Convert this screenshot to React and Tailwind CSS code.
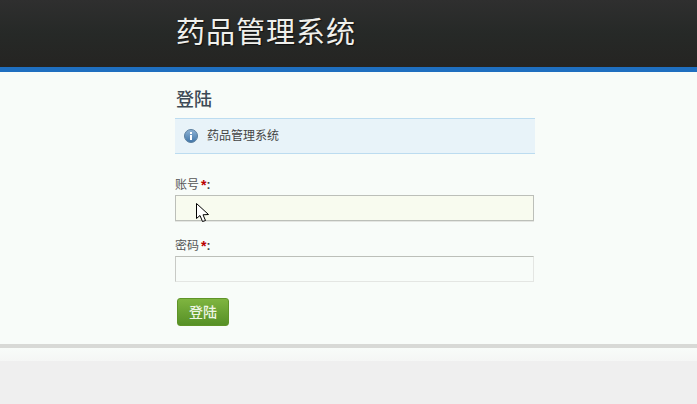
import React from 'react';

const cjk = 'font-["Liberation_Sans","Noto_Sans_CJK_SC",sans-serif]';

const InfoIcon = () => (
  <svg width="14" height="14" viewBox="0 0 14 14" className="shrink-0">
    <defs>
      <linearGradient id="infoFill" x1="0" y1="0" x2="0" y2="1">
        <stop offset="0" stopColor="#8fb4d6" />
        <stop offset="1" stopColor="#3f75a8" />
      </linearGradient>
    </defs>
    <circle cx="7" cy="7" r="6.5" fill="url(#infoFill)" stroke="#5b7f9f" />
    <rect x="6" y="3" width="2" height="2" fill="#fff" />
    <rect x="6" y="6" width="2" height="5" fill="#fff" />
  </svg>
);

const Cursor = () => (
  <svg width="14" height="20" viewBox="0 0 14 20" className="absolute left-[20px] top-[7px]">
    <path
      d="M0.5 0.5 L0.5 15.5 L4 12.5 L6.5 18.5 L9.5 17.5 L7 11.8 L12.5 11.5 Z"
      fill="#fff"
      stroke="#000"
      strokeWidth="1"
    />
  </svg>
);

const Field = ({ label, className, children }) => (
  <div>
    <label className="flex h-[18px] items-center pt-[2px] text-[12px] leading-none text-[#555]">
      {label}
      <span className="ml-[2px] text-[14px] font-bold text-[#b00]">*</span>
      <span className="font-bold text-[#444]">:</span>
    </label>
    <div className={`relative mt-[2px] h-[26px] w-[359px] border ${className}`}>{children}</div>
  </div>
);

export default function App() {
  return (
    <div className={`h-[404px] w-full overflow-hidden bg-[#efefef] ${cjk}`}>
      <header className="h-[72px] border-b-[5px] border-[#1f6fc0] bg-gradient-to-b from-[#2f2f2f] via-[#262927] to-[#252422]">
        <div className="ml-[176px] pt-[13px] text-[29px] leading-[40px] tracking-[1px] text-[#f0f0ec] [text-shadow:1px_1px_1px_#111]">药品管理系统</div>
      </header>

      <main className="h-[272px] bg-[#f8fcf9] pl-[175px]">
        <h1 className="pl-[1px] pt-[17px] text-[18px] font-medium leading-[22px] text-[#3d4a55]">登陆</h1>
        <div className="mt-[7px] flex h-[36px] w-[360px] items-center border-y border-[#bcdcf0] bg-[#e8f3f9] pl-[9px]">
          <InfoIcon />
          <span className="ml-[9px] text-[12px] text-[#444]">药品管理系统</span>
        </div>
        <div className="mt-[21px] flex flex-col gap-[15px]">
          <Field label="账号" className="border-[#bcbfb9] bg-[#f8fbef] shadow-[0_1px_0_#e4e6e2]">
            <Cursor />
          </Field>
          <Field label="密码" className="border-[#e4e6e3] border-t-[#bcbfb9] border-l-[#c8cac6] bg-[#f8fcf9]" />
        </div>
        <button className="ml-[2px] mt-[16px] h-[28px] w-[52px] rounded-[3px] border border-[#5f9428] bg-gradient-to-b from-[#7fb540] to-[#569026] text-[14px] font-medium text-[#eef6e4]">
          登陆
        </button>
      </main>

      <div className="h-[4px] bg-[#d8d9d6]" />
      <div className="h-[13px] bg-gradient-to-b from-[#f8fcf9] to-[#f5f6f5]" />
    </div>
  );
}
